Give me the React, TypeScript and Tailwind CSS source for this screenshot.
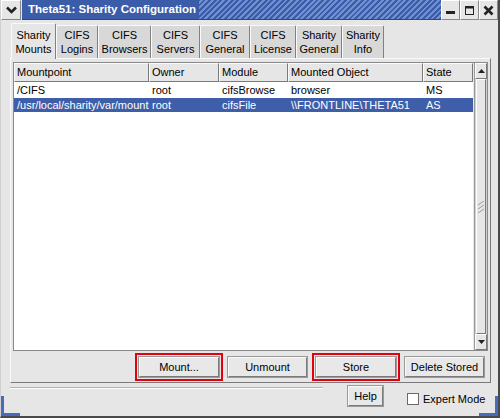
import React from "react";

const tabs = [
  { l1: "Sharity", l2: "Mounts", w: "w-[45px]", active: true },
  { l1: "CIFS", l2: "Logins", w: "w-[42px]" },
  { l1: "CIFS", l2: "Browsers", w: "w-[53px]" },
  { l1: "CIFS", l2: "Servers", w: "w-[49px]" },
  { l1: "CIFS", l2: "General", w: "w-[50px]" },
  { l1: "CIFS", l2: "License", w: "w-[46px]" },
  { l1: "Sharity", l2: "General", w: "w-[46px]" },
  { l1: "Sharity", l2: "Info", w: "w-[42px]" },
];

const cols = [
  { name: "Mountpoint", w: "w-[135px]" },
  { name: "Owner", w: "w-[70px]" },
  { name: "Module", w: "w-[69px]" },
  { name: "Mounted Object", w: "w-[135px]" },
  { name: "State", w: "w-[50px]" },
];

const rows = [
  ["/CIFS", "root", "cifsBrowse", "browser", "MS"],
  ["/usr/local/sharity/var/mounts", "root", "cifsFile", "\\\\FRONTLINE\\THETA51", "AS"],
];

const bevel =
  "bg-[#e8e8e8] border border-t-[#f8f8f8] border-l-[#f8f8f8] border-r-[#7a7a7a] border-b-[#7a7a7a] outline outline-1 outline-[#9a9a9a]";

function Btn({ label, w, boxed, ml }: { label: string; w: string; boxed?: boolean; ml: string }) {
  const b = <div className={`${w} h-[20px] flex items-center justify-center ${bevel}`}>{label}</div>;
  if (!boxed) return <div className={`${ml} shrink-0`}>{b}</div>;
  return <div className={`${ml} shrink-0 border-2 border-[#e3000f] p-[2px]`}>{b}</div>;
}

export default function App() {
  return (
    <div className="w-[500px] h-[418px] bg-[#e6e6e6] relative overflow-hidden font-['Liberation_Sans',Arial,sans-serif] text-[11px] text-black border-r-2 border-b-2 border-[#4a4a4a] border-l border-l-[#d0d0d0]">
      {/* title bar */}
      <div className="flex h-[21px] bg-[#e6e6e6]">
        <div className="w-[20px] shrink-0 h-[20px] flex items-center justify-center border border-t-white border-l-white border-r-[#888] border-b-[#888]">
          <svg width="11" height="8" viewBox="0 0 11 8">
            <path d="M1 1.5 L5.5 6 L10 1.5" stroke="#222" strokeWidth="2.6" fill="none" />
          </svg>
        </div>
        <div className="flex-1 flex h-[20px] ml-[1px] bg-[repeating-linear-gradient(135deg,#3b5ca8_0px,#3b5ca8_2px,#7190d2_2px,#7190d2_4px)] border-b border-[#2c4785]">
          <div className="bg-[#3b5ca8] pl-[6px] pr-[3px] flex items-center text-white font-bold text-[11.5px]">
            Theta51: Sharity Configuration
          </div>
        </div>
        <div className="flex shrink-0">
          {["min", "max", "close"].map((k) => (
            <div
              key={k}
              className="w-[19px] h-[20px] flex items-center justify-center bg-[#e6e6e6] border border-t-white border-l-white border-r-[#888] border-b-[#888]"
            >
              <svg width="11" height="11" viewBox="0 0 11 11">
                {k === "min" && <rect x="1" y="6" width="9" height="3" fill="#222" />}
                {k === "max" && (
                  <g>
                    <rect x="1.5" y="1.5" width="8" height="8" fill="none" stroke="#222" strokeWidth="1" />
                    <rect x="1" y="1" width="9" height="2.5" fill="#222" />
                  </g>
                )}
                {k === "close" && (
                  <path d="M1.5 1.5 L9.5 9.5 M9.5 1.5 L1.5 9.5" stroke="#222" strokeWidth="2.6" />
                )}
              </svg>
            </div>
          ))}
        </div>
      </div>

      {/* tabs */}
      <div className="flex items-end pl-[10px] pt-[2px] h-[37px]">
        {tabs.map((t) => (
          <div
            key={t.l1 + t.l2}
            className={`${t.w} shrink-0 flex flex-col items-center justify-center leading-[14px] border border-b-0 border-t-[#fafafa] border-l-[#fafafa] border-r-[#808080] rounded-t-[2px] ${
              t.active ? "h-[36px] bg-[#e6e6e6] relative z-10 -mb-[1px]" : "h-[33px] bg-[#d8d8d8] mb-0"
            }`}
          >
            <span>{t.l1}</span>
            <span>{t.l2}</span>
          </div>
        ))}
      </div>

      {/* panel */}
      <div className="mx-[9px] w-[481px] h-[325px] border border-t-[#fafafa] border-l-[#fafafa] border-r-[#7a7a7a] border-b-[#7a7a7a] px-[2px] pt-[3px] flex flex-col">
        <div className="flex h-[289px] border border-[#8a8a8a]">
          <div className="w-[460px] bg-white flex flex-col">
            <div className="flex h-[19px] bg-[#e6e6e6]">
              {cols.map((c) => (
                <div
                  key={c.name}
                  className={`${c.w} shrink-0 flex items-center pl-[2px] border border-t-[#fafafa] border-l-[#fafafa] border-r-[#7a7a7a] border-b-[#7a7a7a]`}
                >
                  {c.name}
                </div>
              ))}
            </div>
            {rows.map((r, i) => (
              <div
                key={i}
                className={`flex h-[14px] items-center mt-[1px] ${i === 1 ? "bg-[#3f5ea9] text-white" : ""}`}
              >
                {r.map((cell, j) => (
                  <div key={j} className={`${cols[j].w} shrink-0 pl-[3px] pr-[2px] whitespace-nowrap overflow-hidden leading-[14px]`}>
                    {cell}
                  </div>
                ))}
              </div>
            ))}
          </div>
          <div className="ml-[1px] w-[16px] bg-[#cfcfcf] border-l border-[#9a9a9a] flex flex-col">
            <div className="h-[16px] flex items-center justify-center bg-[#e6e6e6] border border-t-white border-l-white border-r-[#7a7a7a] border-b-[#7a7a7a]">
              <svg width="7" height="4" viewBox="0 0 7 4">
                <path d="M0 4 L3.5 0 L7 4 Z" fill="#222" />
              </svg>
            </div>
            <div className="flex-1 flex items-center justify-center bg-[#e6e6e6] border border-t-white border-l-white border-r-[#7a7a7a] border-b-[#7a7a7a] mx-[1px]">
              <svg width="8" height="12" viewBox="0 0 8 12">
                <path d="M1 4 L7 0 M1 8 L7 4 M1 12 L7 8" stroke="#9a9a9a" strokeWidth="1" />
              </svg>
            </div>
            <div className="h-[16px] flex items-center justify-center bg-[#e6e6e6] border border-t-white border-l-white border-r-[#7a7a7a] border-b-[#7a7a7a]">
              <svg width="7" height="4" viewBox="0 0 7 4">
                <path d="M0 0 L3.5 4 L7 0 Z" fill="#222" />
              </svg>
            </div>
          </div>
        </div>
        <div className="flex items-center mt-[2px]">
          <Btn label="Mount..." w="w-[80px]" boxed ml="ml-[122px]" />
          <Btn label="Unmount" w="w-[79px]" ml="ml-[5px]" />
          <Btn label="Store" w="w-[80px]" boxed ml="ml-[5px]" />
          <Btn label="Delete Stored" w="w-[79px]" ml="ml-[5px]" />
        </div>
      </div>

      {/* bottom bar */}
      <div className="flex items-start pl-[9px] pt-[3px]">
        <div className="w-[313px] h-[2px] border-t border-[#b0b0b0] border-b border-b-white mt-[1px]" />
        <div className={`ml-[25px] w-[35px] h-[20px] flex items-center justify-center ${bevel}`}>Help</div>
        <div className="ml-[24px] mt-[5px] flex items-center">
          <div className="w-[12px] h-[12px] bg-white border border-[#6a6a6a]" />
          <span className="ml-[4px]">Expert Mode</span>
        </div>
      </div>

      {/* resize corners */}
      <div className="absolute left-0 bottom-0 w-[19px] h-[20px] border-l-[3px] border-b-[3px] border-[#4a6bb8]" />
      <div className="absolute right-0 bottom-0 w-[19px] h-[20px] border-r-[3px] border-b-[3px] border-[#4a6bb8]" />
    </div>
  );
}
